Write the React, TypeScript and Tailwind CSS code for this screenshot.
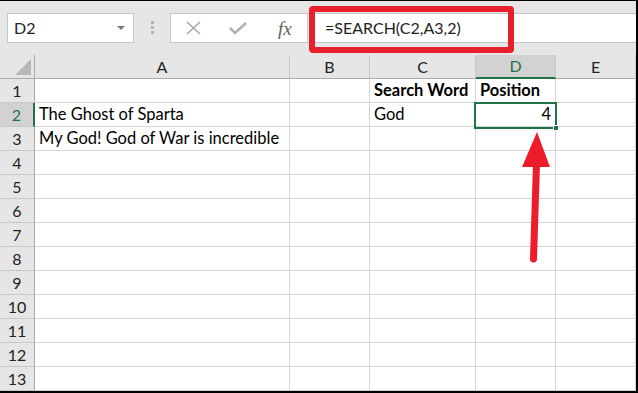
const cols = ["A", "B", "C", "D", "E"]

const rows: Record<number, { [k: string]: { t: string; bold?: boolean; right?: boolean } }> = {
  1: { C: { t: "Search Word", bold: true }, D: { t: "Position", bold: true } },
  2: { A: { t: "The Ghost of Sparta" }, C: { t: "God" }, D: { t: "4", right: true } },
  3: { A: { t: "My God! God of War is incredible" } },
}

const font = { fontFamily: "Lato, 'Noto Sans', sans-serif" }

const App = () => {
  const rowNums = Array.from({ length: 13 }, (_, i) => i + 1)

  return (
    <div className="relative w-[638px] h-[393px] overflow-hidden bg-[#e6e6e6] border-t border-r-2 border-b-2 border-black" style={font}>
      {/* toolbar */}
      <div className="h-[54px] flex items-start pt-[12px]">
        <div className="ml-[7px] w-[127px] h-[30px] bg-white border border-[#c6c6c6] flex items-center justify-between pl-[6px] pr-[8px]">
          <span className="text-[16px] text-[#222]">D2</span>
          <span className="w-0 h-0 border-l-[4px] border-r-[4px] border-t-[4px] border-l-transparent border-r-transparent border-t-[#777]"></span>
        </div>
        <div className="ml-[17px] mr-[16px] mt-[8px] flex flex-col gap-[2px]">
          <span className="w-[3px] h-[3px] bg-[#b3b3b3]"></span>
          <span className="w-[3px] h-[3px] bg-[#b3b3b3]"></span>
          <span className="w-[3px] h-[3px] bg-[#b3b3b3]"></span>
        </div>
        <div className="w-[138px] h-[30px] bg-white border border-[#c6c6c6] flex items-center pl-[13px] gap-[24px]">
          <svg width="20" height="14" viewBox="0 0 20 14">
            <path d="M3 1 L16 13 M16 1 L3 13" stroke="#a8a8a8" strokeWidth="1.6" fill="none" />
          </svg>
          <svg width="20" height="14" viewBox="0 0 20 14">
            <path d="M2 7 L7 12 L18 2" stroke="#b0b0b0" strokeWidth="2.6" fill="none" />
          </svg>
          <span className="ml-[6px] text-[19px] italic text-[#5e5e5e] leading-none" style={{ fontFamily: "'Liberation Serif', serif" }}>fx</span>
        </div>
        <div className="flex-1 h-[30px] bg-white border-y border-[#c6c6c6] flex items-center pl-[17px]">
          <span className="text-[16px] text-[#222]">=SEARCH(C2,A3,2)</span>
        </div>
      </div>

      {/* sheet */}
      <div className="grid grid-cols-[35px_255px_80px_106px_80px_80px] bg-white">
        <div className="h-[24px] bg-[#e6e6e6] border-r border-b border-[#ababab] flex items-end justify-end pr-[3px] pb-[3px]">
          <span className="w-0 h-0 border-l-[16px] border-t-[16px] border-l-transparent border-t-transparent border-b-0 border-r-0 relative">
            <span className="absolute right-0 bottom-0 w-0 h-0 border-l-[16px] border-b-[16px] border-l-transparent border-b-[#b8b8b8]"></span>
          </span>
        </div>
        {cols.map((c) => (
          <div
            key={c}
            className={
              c === "D"
                ? "h-[24px] bg-[#d2d2d2] border-r border-[#c8c8c8] border-b-2 border-b-[#217346] flex items-center justify-center text-[16px] text-[#217346]"
                : "h-[24px] bg-[#e6e6e6] border-r border-[#c8c8c8] border-b border-b-[#ababab] flex items-center justify-center text-[16px] text-[#222]"
            }
          >
            {c}
          </div>
        ))}

        {rowNums.map((r) => (
          <div key={r} className="contents">
            <div
              className={
                r === 2
                  ? "h-[24px] bg-[#d2d2d2] border-r-2 border-r-[#217346] border-b border-b-[#c8c8c8] flex items-center justify-center text-[16px] text-[#217346]"
                  : "h-[24px] bg-[#e6e6e6] border-r border-r-[#a6a6a6] border-b border-b-[#c8c8c8] flex items-center justify-center text-[16px] text-[#222]"
              }
            >
              {r}
            </div>
            {cols.map((c) => {
              const cell = rows[r]?.[c]
              return (
                <div
                  key={c}
                  className={
                    "h-[24px] border-r border-b border-[#d4d4d4] flex items-center px-[4px] whitespace-nowrap text-[16.5px] text-black " +
                    (cell?.right ? "justify-end " : "") +
                    (cell?.bold ? "font-bold" : "")
                  }
                >
                  {cell?.t}
                </div>
              )
            })}
          </div>
        ))}
      </div>

      {/* selected cell D2 */}
      <div className="absolute left-[474px] top-[101px] w-[83px] h-[27px] border-2 border-[#217346]"></div>
      <div className="absolute left-[553px] top-[124px] w-[6px] h-[6px] bg-[#217346] border border-white"></div>

      {/* red highlight round the formula */}
      <div className="absolute left-[309px] top-[5px] w-[205px] h-[47px] border-[6px] border-[#e8202b] rounded-[4px]"></div>

      {/* red arrow */}
      <svg className="absolute left-0 top-0" width="638" height="393" viewBox="0 0 638 393">
        <polygon points="537,131 522,166 550,166" fill="#ed1c2a" />
        <line x1="536.5" y1="163" x2="533.5" y2="258" stroke="#ed1c2a" strokeWidth="7" strokeLinecap="round" />
      </svg>
    </div>
  )
}

export default App
